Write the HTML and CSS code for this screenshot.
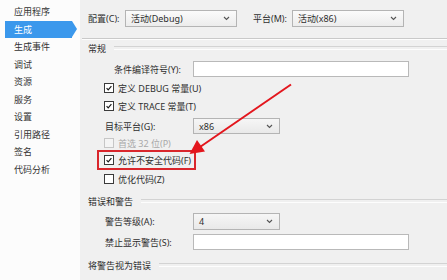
FILE: index.html
```html
<!DOCTYPE html>
<html lang="zh-CN">
<head>
<meta charset="utf-8">
<link rel="stylesheet" href="styles.css">
</head>
<body>
<div class="app">
  <nav class="sidebar">
    <div class="nav-item">应用程序</div>
    <div class="nav-item active">生成</div>
    <div class="nav-item">生成事件</div>
    <div class="nav-item">调试</div>
    <div class="nav-item">资源</div>
    <div class="nav-item">服务</div>
    <div class="nav-item">设置</div>
    <div class="nav-item">引用路径</div>
    <div class="nav-item">签名</div>
    <div class="nav-item">代码分析</div>
  </nav>
  <main class="content">
    <div class="toprow">
      <span class="top-label">配置(C):</span>
      <div class="select select-top"><span>活动(Debug)</span><svg class="chev" viewBox="0 0 7 5"><path d="M1 1 L3.5 3.5 L6 1"/></svg></div>
      <span class="top-label top-label2">平台(M):</span>
      <div class="select select-top"><span>活动(x86)</span><svg class="chev" viewBox="0 0 7 5"><path d="M1 1 L3.5 3.5 L6 1"/></svg></div>
    </div>
    <div class="sep"></div>

    <div class="heading h-general">常规</div>
    <div class="row r-cond"><span class="lbl lbl-wide">条件编译符号(Y):</span><div class="input"></div></div>
    <div class="row r-debug"><span class="cb checked"><svg viewBox="0 0 10 10"><path d="M2 5.2 L4 7.3 L8 2.6"/></svg></span><span>定义 DEBUG 常量(U)</span></div>
    <div class="row r-trace"><span class="cb checked"><svg viewBox="0 0 10 10"><path d="M2 5.2 L4 7.3 L8 2.6"/></svg></span><span>定义 TRACE 常量(T)</span></div>
    <div class="row r-target"><span class="lbl lbl-mid">目标平台(G):</span><div class="select select-small"><span>x86</span><svg class="chev" viewBox="0 0 7 5"><path d="M1 1 L3.5 3.5 L6 1"/></svg></div></div>
    <div class="row r-prefer disabled"><span class="cb"></span><span>首选 32 位(P)</span></div>
    <div class="row r-unsafe"><label class="highlight"><span class="cb checked"><svg viewBox="0 0 10 10"><path d="M2 5.2 L4 7.3 L8 2.6"/></svg></span><span>允许不安全代码(F)</span></label></div>
    <div class="row r-opt"><span class="cb"></span><span>优化代码(Z)</span></div>

    <div class="heading h-errors">错误和警告</div>
    <div class="row r-level"><span class="lbl lbl-mid">警告等级(A):</span><div class="select select-small select-level"><span>4</span><svg class="chev" viewBox="0 0 7 5"><path d="M1 1 L3.5 3.5 L6 1"/></svg></div></div>
    <div class="row r-suppress"><span class="lbl lbl-mid">禁止显示警告(S):</span><div class="input"></div></div>

    <div class="heading h-treat">将警告视为错误</div>
  </main>
  <svg class="arrow" width="447" height="280" viewBox="0 0 447 280">
    <line x1="291" y1="84.5" x2="200" y2="147" />
    <polygon points="189.5,154 205,151.5 197,140" />
  </svg>
</div>
</body>
</html>
```

FILE: styles.css
```css
* { box-sizing: border-box; }

body {
  margin: 0;
  width: 447px;
  height: 280px;
  overflow: hidden;
  font-family: "Segoe UI", "Noto Sans", "Noto Sans CJK SC", sans-serif;
  font-size: 9px;
  color: #2e2e2e;
  background: #f0f0f0;
}

.app {
  position: relative;
  display: flex;
  height: 280px;
}

.sidebar {
  flex: none;
  width: 80px;
  padding-top: 3px;
  background: #fcfcfc;
}

.nav-item {
  height: 17.5px;
  line-height: 17px;
  padding-left: 14px;
  white-space: nowrap;
  color: #333;
}

.nav-item.active {
  position: relative;
  height: 17px;
  margin: 0 8px 0.5px 5px;
  padding-left: 9px;
  background: #3b98ec;
  color: #fff;
}

.nav-item.active::after {
  content: "";
  position: absolute;
  top: 0;
  right: -5px;
  border-left: 5px solid #3b98ec;
  border-top: 8.5px solid transparent;
  border-bottom: 8.5px solid transparent;
}

.content {
  flex: 1;
  padding-left: 8px;
  display: flex;
  flex-direction: column;
}

.toprow {
  height: 38px;
  display: flex;
  align-items: center;
  padding-bottom: 1px;
}

.top-label {
  width: 37px;
  white-space: nowrap;
}

.top-label2 {
  width: 39px;
  margin-left: 16px;
}

.select {
  display: flex;
  align-items: center;
  justify-content: space-between;
  padding: 0 6px 0 5px;
  border: 1px solid #b4b4b4;
  background: linear-gradient(#fbfbfb, #ececec);
  white-space: nowrap;
}

.select-top {
  width: 112px;
  height: 17px;
}

.select-small {
  width: 87px;
  height: 16px;
  background: linear-gradient(#f6f6f6, #e9e9e9);
}

.select-level {
  height: 17px;
}

.chev {
  width: 7px;
  height: 5px;
  fill: none;
  stroke: #555;
  stroke-width: 1.1;
}

.sep {
  height: 2px;
  margin-left: -6px;
  border-top: 1px solid #c9c9c9;
  border-bottom: 1px solid #fdfdfd;
}

.heading {
  display: flex;
  align-items: center;
  height: 16px;
  white-space: nowrap;
}

.heading::after {
  content: "";
  flex: 1;
  height: 2px;
  margin-left: 8px;
  border-top: 1px solid #d3d3d3;
  border-bottom: 1px solid #fdfdfd;
}

.h-errors { margin-top: 6px; }
.h-treat { margin-top: 7px; }

.row {
  display: flex;
  align-items: center;
  height: 16px;
  padding-left: 16px;
  white-space: nowrap;
}

.r-cond { margin-top: 5px; padding-left: 26px; }
.r-debug { margin-top: 3px; }
.r-trace { margin-top: 2px; }
.r-target { margin-top: 4px; padding-left: 17px; }
.r-prefer { margin-top: 1px; }
.r-unsafe { margin-top: 1px; }
.r-opt { margin-top: 3px; }
.r-level { margin-top: 4px; height: 17px; padding-left: 17px; }
.r-suppress { margin-top: 4px; padding-left: 17px; }

.lbl-wide { width: 79px; }
.lbl-mid { width: 88px; }

.input {
  width: 216px;
  height: 16px;
  border: 1px solid #b9b9b9;
  background: #fff;
}

.cb {
  flex: none;
  width: 10px;
  height: 10px;
  margin-right: 4px;
  border: 1px solid #3a3a3a;
  background: #fff;
  display: flex;
}

.cb svg {
  width: 8px;
  height: 8px;
  fill: none;
  stroke: #1a1a1a;
  stroke-width: 1.5;
}

.disabled { color: #a8a8a8; }
.disabled .cb { border-color: #c6c6c6; background: #f4f4f4; }

.highlight {
  display: flex;
  align-items: center;
  height: 16px;
  margin-left: -5px;
  padding: 0 3px 0 5px;
  outline: 2px solid #d9262c;
}

.arrow {
  position: absolute;
  top: 0;
  left: 0;
  pointer-events: none;
}

.arrow line {
  stroke: #e3161d;
  stroke-width: 2;
}

.arrow polygon {
  fill: #e3161d;
}
```
